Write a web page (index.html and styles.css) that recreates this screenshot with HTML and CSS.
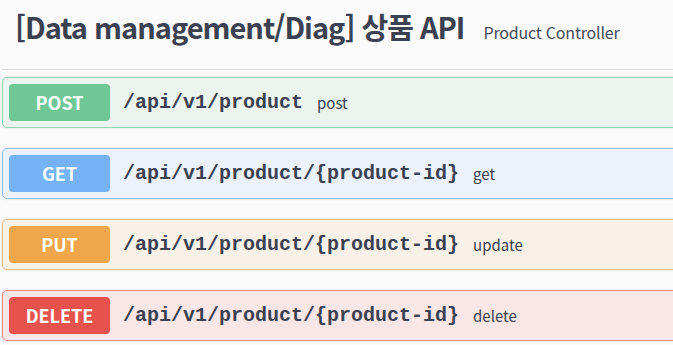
FILE: index.html
```html
<!DOCTYPE html>
<html lang="ko">
<head>
  <meta charset="UTF-8" />
  <title>Product Controller</title>
  <link rel="stylesheet" href="styles.css">
</head>
<body>
  <div class="tag">
    <h3 class="tag-title">[Data management/Diag] 상품 API</h3>
    <small class="tag-desc">Product Controller</small>
  </div>

  <div class="op op-post">
    <span class="method">POST</span>
    <span class="path">/api/v1/product</span>
    <span class="desc">post</span>
  </div>
  <div class="op op-get">
    <span class="method">GET</span>
    <span class="path">/api/v1/product/{product-id}</span>
    <span class="desc">get</span>
  </div>
  <div class="op op-put">
    <span class="method">PUT</span>
    <span class="path">/api/v1/product/{product-id}</span>
    <span class="desc">update</span>
  </div>
  <div class="op op-delete">
    <span class="method">DELETE</span>
    <span class="path">/api/v1/product/{product-id}</span>
    <span class="desc">delete</span>
  </div>
</body>
</html>
```
FILE: styles.css
```css
body {
  margin: 0;
  padding: 0 0 0 2px;
  background: #fafafa;
  font-family: "Noto Sans CJK KR", "Noto Sans", sans-serif;
  color: #3b4151;
  overflow: hidden;
}
.tag {
  display: flex;
  align-items: baseline;
  height: 70px;
  box-sizing: border-box;
  padding: 6px 0 0 13px;
  border-bottom: 1px solid #d9dbdf;
  margin-right: -10px;
  margin-bottom: 7px;
}
.tag-title {
  margin: 0;
  font-size: 29px;
  font-weight: 700;
  letter-spacing: -1px;
  line-height: 40px;
}
.tag-desc {
  margin-left: 19px;
  font-size: 16px;
  letter-spacing: -0.2px;
  color: #454b59;
}
.op {
  display: flex;
  align-items: center;
  padding: 6px;
  margin: 0 -10px 20px 0;
  border: 1px solid;
  border-radius: 5px;
  box-shadow: 0 0 3px rgba(0, 0, 0, 0.12);
}
.method {
  width: 101px;
  height: 37px;
  line-height: 37px;
  border-radius: 4px;
  text-align: center;
  color: #fff;
  font-size: 18px;
  font-weight: 700;
}
.path {
  margin-left: 13px;
  font-family: "Liberation Mono", monospace;
  font-size: 20px;
  font-weight: 700;
  color: #3b4151;
}
.desc {
  margin-left: 14px;
  font-size: 15px;
  color: #3b4151;
}
.op-post { background: #ebf4ee; border-color: #8fd8b0; }
.op-post .method { background: #6fc796; }
.op-get { background: #ebf2fb; border-color: #8dbff7; }
.op-get .method { background: #75b2f8; }
.op-put { background: #f8f1e8; border-color: #f3c185; }
.op-put .method { background: #f0a74c; }
.op-delete { background: #f9e6e6; border-color: #ef8a88; }
.op-delete .method { background: #e8524d; }
```
